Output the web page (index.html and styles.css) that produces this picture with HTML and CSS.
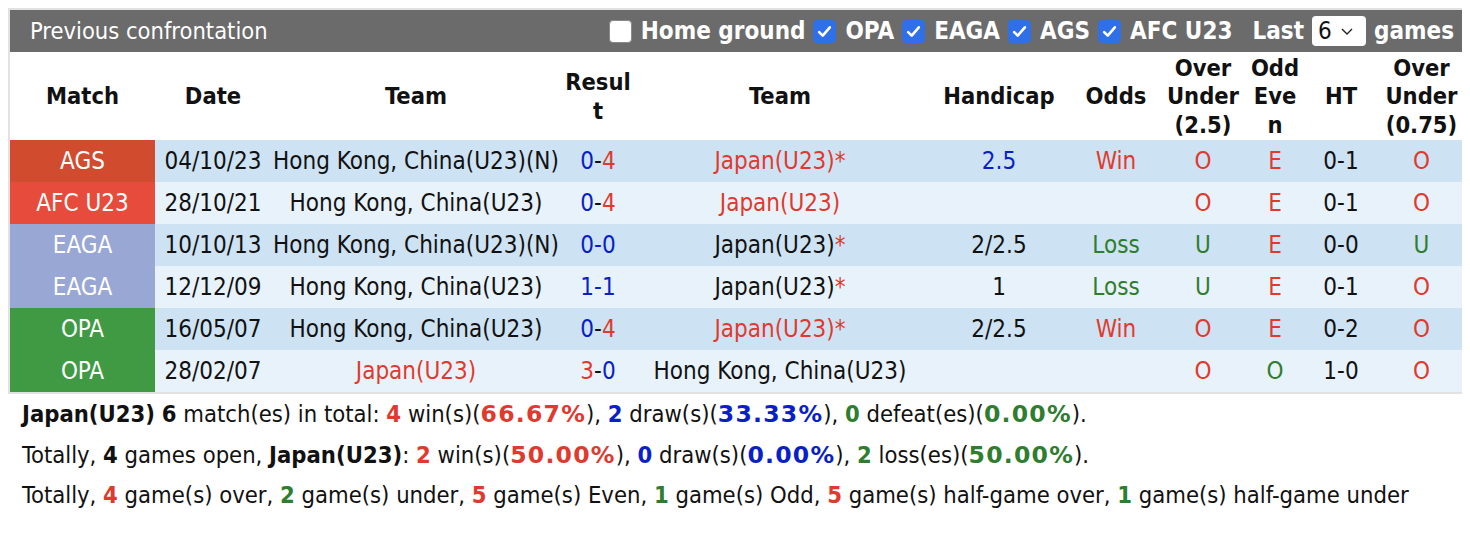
FILE: index.html
```html
<!DOCTYPE html>
<html>
<head>
<meta charset="utf-8">
<link rel="stylesheet" href="styles.css">
</head>
<body>
<div class="box">
  <div class="bar">
    <div class="title">Previous confrontation</div>
    <div class="filters">
      <label class="chk"><span class="cb"></span>Home ground</label>
      <label class="chk"><span class="cb on"><svg viewBox="0 0 16 16"><path d="M3.5 8.5 L6.5 11.5 L12.5 4.5" fill="none" stroke="#fff" stroke-width="2.2" stroke-linecap="round" stroke-linejoin="round"/></svg></span>OPA</label>
      <label class="chk"><span class="cb on"><svg viewBox="0 0 16 16"><path d="M3.5 8.5 L6.5 11.5 L12.5 4.5" fill="none" stroke="#fff" stroke-width="2.2" stroke-linecap="round" stroke-linejoin="round"/></svg></span>EAGA</label>
      <label class="chk"><span class="cb on"><svg viewBox="0 0 16 16"><path d="M3.5 8.5 L6.5 11.5 L12.5 4.5" fill="none" stroke="#fff" stroke-width="2.2" stroke-linecap="round" stroke-linejoin="round"/></svg></span>AGS</label>
      <label class="chk"><span class="cb on"><svg viewBox="0 0 16 16"><path d="M3.5 8.5 L6.5 11.5 L12.5 4.5" fill="none" stroke="#fff" stroke-width="2.2" stroke-linecap="round" stroke-linejoin="round"/></svg></span>AFC U23</label>
      <span class="last">Last</span>
      <span class="sel">6<svg viewBox="0 0 14 10"><path d="M2 3 L7 8 L12 3" fill="none" stroke="#222" stroke-width="1.4"/></svg></span>
      <span class="games">games</span>
    </div>
  </div>
  <table class="tbl">
    <colgroup>
      <col class="c-match"><col class="c-date"><col class="c-team"><col class="c-res"><col class="c-team2"><col class="c-hc"><col class="c-odds"><col class="c-ou"><col class="c-oe"><col class="c-ht"><col class="c-ou2">
    </colgroup>
    <thead>
      <tr>
        <th>Match</th><th>Date</th><th>Team</th><th>Resul<br>t</th><th>Team</th><th>Handicap</th><th>Odds</th><th>Over<br>Under<br>(2.5)</th><th>Odd<br>Eve<br>n</th><th>HT</th><th>Over<br>Under<br>(0.75)</th>
      </tr>
    </thead>
    <tbody>
      <tr class="dk">
        <td class="lg ags">AGS</td><td>04/10/23</td><td>Hong Kong, China(U23)(N)</td><td><span class="b">0</span>-<span class="r">4</span></td><td class="r">Japan(U23)*</td><td class="b">2.5</td><td class="r">Win</td><td class="r">O</td><td class="r">E</td><td>0-1</td><td class="r">O</td>
      </tr>
      <tr class="lt">
        <td class="lg afc">AFC U23</td><td>28/10/21</td><td>Hong Kong, China(U23)</td><td><span class="b">0</span>-<span class="r">4</span></td><td class="r">Japan(U23)</td><td></td><td></td><td class="r">O</td><td class="r">E</td><td>0-1</td><td class="r">O</td>
      </tr>
      <tr class="dk">
        <td class="lg eaga">EAGA</td><td>10/10/13</td><td>Hong Kong, China(U23)(N)</td><td class="b">0-0</td><td>Japan(U23)<span class="r">*</span></td><td>2/2.5</td><td class="g">Loss</td><td class="g">U</td><td class="r">E</td><td>0-0</td><td class="g">U</td>
      </tr>
      <tr class="lt">
        <td class="lg eaga">EAGA</td><td>12/12/09</td><td>Hong Kong, China(U23)</td><td class="b">1-1</td><td>Japan(U23)<span class="r">*</span></td><td>1</td><td class="g">Loss</td><td class="g">U</td><td class="r">E</td><td>0-1</td><td class="r">O</td>
      </tr>
      <tr class="dk">
        <td class="lg opa">OPA</td><td>16/05/07</td><td>Hong Kong, China(U23)</td><td><span class="b">0</span>-<span class="r">4</span></td><td class="r">Japan(U23)*</td><td>2/2.5</td><td class="r">Win</td><td class="r">O</td><td class="r">E</td><td>0-2</td><td class="r">O</td>
      </tr>
      <tr class="lt">
        <td class="lg opa">OPA</td><td>28/02/07</td><td class="r">Japan(U23)</td><td><span class="r">3</span>-<span class="b">0</span></td><td>Hong Kong, China(U23)</td><td></td><td></td><td class="r">O</td><td class="g">O</td><td>1-0</td><td class="r">O</td>
      </tr>
    </tbody>
  </table>
</div>
<div class="summary">
  <p><b>Japan(U23)</b> <b>6</b> match(es) in total: <b class="r">4</b> win(s)(<b class="r p">66.67%</b>), <b class="b">2</b> draw(s)(<b class="b p">33.33%</b>), <b class="g">0</b> defeat(es)(<b class="g p">0.00%</b>).</p>
  <p>Totally, <b>4</b> games open, <b>Japan(U23)</b>: <b class="r">2</b> win(s)(<b class="r p">50.00%</b>), <b class="b">0</b> draw(s)(<b class="b p">0.00%</b>), <b class="g">2</b> loss(es)(<b class="g p">50.00%</b>).</p>
  <p>Totally, <b class="r">4</b> game(s) over, <b class="g">2</b> game(s) under, <b class="r">5</b> game(s) Even, <b class="g">1</b> game(s) Odd, <b class="r">5</b> game(s) half-game over, <b class="g">1</b> game(s) half-game under</p>
</div>
</body>
</html>
```

FILE: styles.css
```css
* { box-sizing: border-box; }
body {
  margin: 8px;
  font-family: "DejaVu Sans Condensed", "Liberation Sans", sans-serif;
  font-size: 24px;
  color: #111;
  background: #fff;
}
.box {
  width: 1458px;
  border: 2px solid #e2e2e2;
}
.bar {
  height: 42px;
  background: #6b6b6b;
  color: #fff;
  display: flex;
  align-items: center;
  justify-content: space-between;
  padding: 0 10px 0 20px;
}
.title { font-size: 23.5px; }
.filters {
  display: flex;
  align-items: center;
  font-weight: bold;
  font-size: 24px;
}
.chk { display: flex; align-items: center; margin-left: 8px; }
.cb {
  flex-shrink: 0;
  width: 23px; height: 23px;
  border-radius: 4px;
  background: #fff;
  border: 1px solid #8a8a8a;
  margin-right: 9px;
  display: inline-flex;
  align-items: center;
  justify-content: center;
}
.cb.on { background: #2f6fe8; border-color: #2f6fe8; }
.cb svg { width: 19px; height: 19px; }
.last { margin-left: 20px; }
.sel {
  flex-shrink: 0;
  margin-left: 8px;
  background: #fff;
  color: #111;
  font-weight: normal;
  border-radius: 4px;
  height: 30px;
  width: 54px;
  display: inline-flex;
  align-items: center;
  padding-left: 6px;
  gap: 8px;
}
.sel svg { width: 14px; height: 10px; }
.games { margin-left: 8px; }
.tbl {
  width: 100%;
  border-collapse: collapse;
  table-layout: fixed;
}
.c-match { width: 145px; }
.c-date { width: 116px; }
.c-team { width: 290px; }
.c-res { width: 74px; }
.c-team2 { width: 290px; }
.c-hc { width: 148px; }
.c-odds { width: 86px; }
.c-ou { width: 88px; }
.c-oe { width: 56px; }
.c-ht { width: 76px; }
.c-ou2 { width: auto; }
th {
  height: 88px;
  font-size: 23.5px;
  font-weight: bold;
  line-height: 28.5px;
  text-align: center;
  padding: 1px 0 0;
  vertical-align: middle;
  background: #fff;
}
td {
  height: 42px;
  padding: 0;
  text-align: center;
  white-space: nowrap;
}
tr.dk td { background: #cde2f2; }
tr.lt td { background: #e8f2fa; }
tr td.lg { color: #fff; }
tr td.ags { background: #d14b2f; }
tr td.afc { background: #e74b3c; }
tr td.eaga { background: #99a7d5; }
tr td.opa { background: #3f9a43; }
.r { color: #e03a2e; }
.b { color: #0a1fc8; }
.g { color: #2f7d2f; }
.summary { padding: 0 0 0 14px; font-size: 23.6px; }
.summary p { margin: 0; height: 40.5px; line-height: 40px; white-space: nowrap; }
.summary b { font-weight: bold; }
.summary b.p { font-family: "DejaVu Sans", "Liberation Sans", sans-serif; letter-spacing: 1.2px; }
```
